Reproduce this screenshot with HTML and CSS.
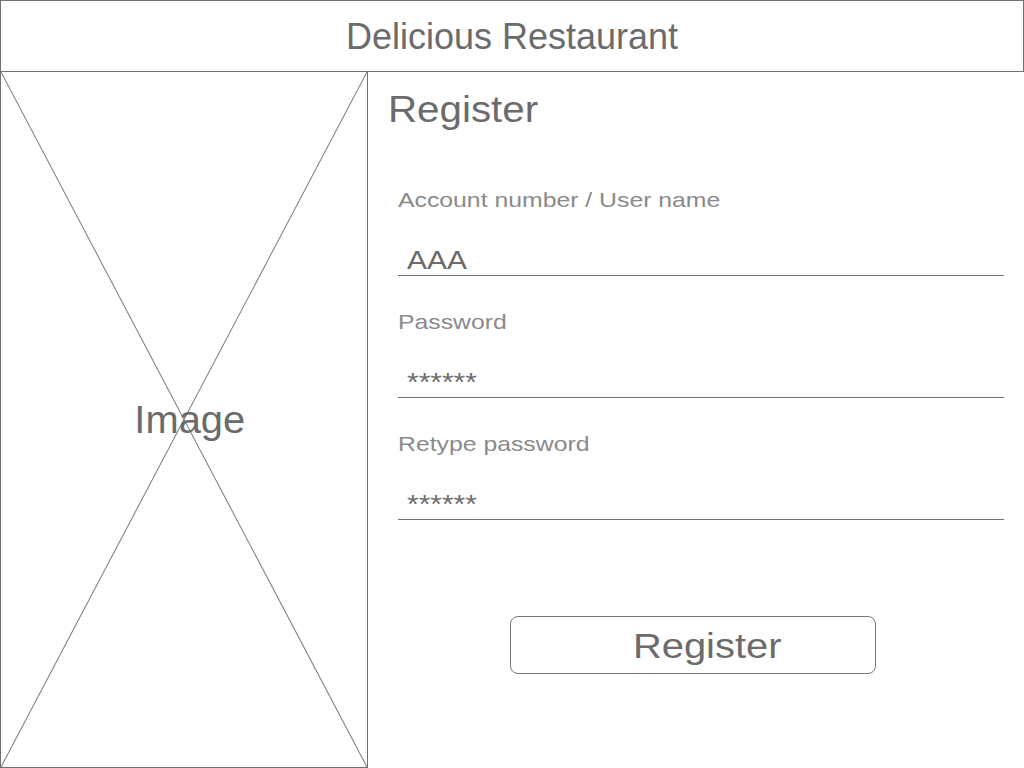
FILE: index.html
```html
<!DOCTYPE html>
<html lang="en">
<head>
<meta charset="utf-8">
<title>Delicious Restaurant - Register</title>
<link rel="stylesheet" href="styles.css">
</head>
<body>
<header class="topbar"><span class="title">Delicious Restaurant</span></header>
<main class="layout">
  <div class="image-ph">
    <svg class="cross" viewBox="0 0 100 100" preserveAspectRatio="none" aria-hidden="true">
      <line x1="0" y1="0" x2="100" y2="100" vector-effect="non-scaling-stroke"/>
      <line x1="100" y1="0" x2="0" y2="100" vector-effect="non-scaling-stroke"/>
    </svg>
    <span class="image-label">Image</span>
  </div>
  <section class="form">
    <h1 class="form-title"><span class="stretch st-title">Register</span></h1>
    <div class="fields">
      <div class="field">
        <div class="field-label"><span class="stretch st-label">Account number / User name</span></div>
        <div class="field-input"><span class="stretch st-input">AAA</span></div>
      </div>
      <div class="field">
        <div class="field-label"><span class="stretch st-label">Password</span></div>
        <div class="field-input"><span class="stretch st-input">******</span></div>
      </div>
      <div class="field">
        <div class="field-label"><span class="stretch st-label">Retype password</span></div>
        <div class="field-input"><span class="stretch st-input">******</span></div>
      </div>
    </div>
    <button class="btn" type="button"><span class="btn-text">Register</span></button>
  </section>
</main>
</body>
</html>
```
FILE: styles.css
```css
html, body {
  margin: 0;
  padding: 0;
  background: #ffffff;
}
body {
  font-family: "Liberation Sans", Arial, sans-serif;
  color: #6b6b6b;
  width: 1024px;
  height: 768px;
  overflow: hidden;
}
.topbar {
  height: 72px;
  box-sizing: border-box;
  border: 1px solid #707070;
  padding-top: 2px;
  display: flex;
  align-items: center;
  justify-content: center;
}
.title {
  font-size: 36px;
  line-height: 40px;
  color: #6b6b6b;
}
.layout {
  display: flex;
  height: 696px;
}
.image-ph {
  position: relative;
  width: 368px;
  flex: none;
  box-sizing: border-box;
  border: 1px solid #707070;
  border-top: none;
  display: flex;
  align-items: center;
  justify-content: center;
  padding-left: 12px;
}
.cross {
  position: absolute;
  left: 0;
  top: 0;
  width: 100%;
  height: 100%;
}
.cross line {
  stroke: #7a7a7a;
  stroke-width: 1;
}
.image-label {
  position: relative;
  font-size: 38px;
  line-height: 44px;
  color: #6b6b6b;
  display: inline-block;
  transform: scaleX(1.05);
}
.form {
  flex: 1;
  padding: 16px 20px 0 18px;
  display: flex;
  flex-direction: column;
}
.stretch {
  display: inline-block;
  transform-origin: 0 50%;
  white-space: nowrap;
}
.form-title {
  margin: 0;
  padding-left: 2px;
  font-weight: normal;
  font-size: 36px;
  line-height: 44px;
  height: 44px;
  color: #6b6b6b;
}
.st-title { transform: scaleX(1.12); }
.fields {
  margin-top: 48px;
  margin-left: 12px;
  display: flex;
  flex-direction: column;
  gap: 26px;
}
.field {
  display: flex;
  flex-direction: column;
}
.field-label {
  height: 40px;
  font-size: 21px;
  line-height: 40px;
  color: #8a8a8a;
}
.st-label { transform: scaleX(1.18); }
.field-input {
  height: 56px;
  box-sizing: border-box;
  border-bottom: 1px solid #707070;
  display: flex;
  align-items: flex-end;
  padding-left: 9px;
  font-size: 26px;
  line-height: 30px;
  color: #6b6b6b;
}
.st-input { transform: scaleX(1.15); }
.btn {
  margin-top: 96px;
  margin-left: 124px;
  width: 366px;
  height: 58px;
  box-sizing: border-box;
  border: 1px solid #777777;
  border-radius: 8px;
  background: #ffffff;
  padding: 2px 0 0 29px;
  font: inherit;
  font-size: 35px;
  line-height: 40px;
  color: #6b6b6b;
  display: flex;
  align-items: center;
  justify-content: center;
}
.btn-text {
  display: inline-block;
  transform: scaleX(1.14);
  transform-origin: 50% 50%;
}
```
